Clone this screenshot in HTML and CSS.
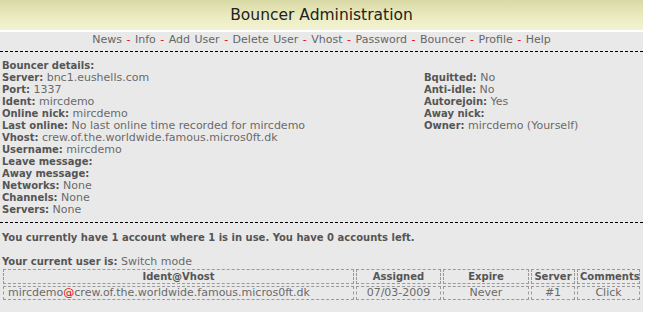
FILE: index.html
```html
<html lang="en">
<head>
    <meta charset="UTF-8">
    <title>Bouncer Administration</title>
    <link rel="stylesheet" href="styles.css">
</head>
<body>
    <div class="page">
        <div class="header">Bouncer Administration</div>

        <div class="nav">
            <a>News</a> <span class="sep">-</span>
            <a>Info</a> <span class="sep">-</span>
            <a>Add User</a> <span class="sep">-</span>
            <a>Delete User</a> <span class="sep">-</span>
            <a>Vhost</a> <span class="sep">-</span>
            <a>Password</a> <span class="sep">-</span>
            <a>Bouncer</a> <span class="sep">-</span>
            <a>Profile</a> <span class="sep">-</span>
            <a>Help</a>
        </div>

        <div class="details">
            <div class="col-left">
                <b>Bouncer details:</b><br>
                <b>Server:</b> bnc1.eushells.com<br>
                <b>Port:</b> 1337<br>
                <b>Ident:</b> mircdemo<br>
                <b>Online nick:</b> mircdemo<br>
                <b>Last online:</b> No last online time recorded for mircdemo<br>
                <b>Vhost:</b> crew.of.the.worldwide.famous.micros0ft.dk<br>
                <b>Username:</b> mircdemo<br>
                <b>Leave message:</b><br>
                <b>Away message:</b><br>
                <b>Networks:</b> None<br>
                <b>Channels:</b> None<br>
                <b>Servers:</b> None
            </div>
            <div class="col-right">
                <br>
                <b>Bquitted:</b> No<br>
                <b>Anti-idle:</b> No<br>
                <b>Autorejoin:</b> Yes<br>
                <b>Away nick:</b><br>
                <b>Owner:</b> mircdemo (Yourself)
            </div>
        </div>

        <div class="accounts">
            <p class="summary"><b>You currently have 1 account where 1 is in use. You have 0 accounts left.</b></p>
            <p class="current"><b>Your current user is:</b> Switch mode</p>

            <table class="users">
                <tr>
                    <th class="c-ident">Ident@Vhost</th>
                    <th class="c-assigned">Assigned</th>
                    <th class="c-expire">Expire</th>
                    <th class="c-server">Server</th>
                    <th class="c-comments">Comments</th>
                </tr>
                <tr>
                    <td class="left">mircdemo<span class="at">@</span>crew.of.the.worldwide.famous.micros0ft.dk</td>
                    <td>07/03-2009</td>
                    <td>Never</td>
                    <td>#1</td>
                    <td>Click</td>
                </tr>
            </table>
        </div>
    </div>
</body>
</html>
```

FILE: styles.css
```css
body {
    margin: 0;
    background-color: #fff;
    font-family: "DejaVu Sans", Verdana, sans-serif;
    font-size: 11px;
    color: #6a6a6a;
}
.page {
    width: 643px;
    height: 312px;
    background-color: #e9e9e9;
}
.header {
    height: 30px;
    line-height: 30px;
    text-align: center;
    font-size: 15.5px;
    color: #222;
    background: linear-gradient(to bottom, #d9d9a6, #ececc2 60%, #f3f3d6);
    border-bottom: 2px solid #fff;
}
.nav {
    height: 19px;
    line-height: 16px;
    text-align: center;
    word-spacing: 1px;
    color: #666;
    border-bottom: 1px dashed #000;
}
.nav .sep {
    color: #e00;
}
.details {
    display: grid;
    grid-template-columns: 422px 1fr;
    padding: 8px 2px 6px 2px;
    line-height: 12px;
    border-bottom: 1px dashed #000;
}
b {
    font-size: 10px;
    color: #555;
}
.accounts {
    padding: 0 1px;
}
.summary {
    margin: 9px 0 0 1px;
    line-height: 12px;
}
.current {
    margin: 12px 0 0 1px;
    line-height: 12px;
}
.users {
    width: 641px;
    table-layout: fixed;
    border-spacing: 2px;
    margin-top: -1px;
    font-size: 11px;
    color: #6a6a6a;
}
.users th,
.users td {
    box-sizing: border-box;
    border: 1px dashed #999;
    padding: 0 2px;
    text-align: center;
    line-height: 12px;
    white-space: nowrap;
    overflow: hidden;
}
.users th {
    font-size: 10px;
    color: #555;
    padding-top: 1px;
}
.users td.left {
    text-align: left;
    padding-left: 4px;
}
.c-ident { width: 351px; }
.c-assigned { width: 85px; }
.c-expire { width: 86px; }
.c-server { width: 44px; }
.c-comments { width: 63px; }
.at {
    color: #e00;
}
```
